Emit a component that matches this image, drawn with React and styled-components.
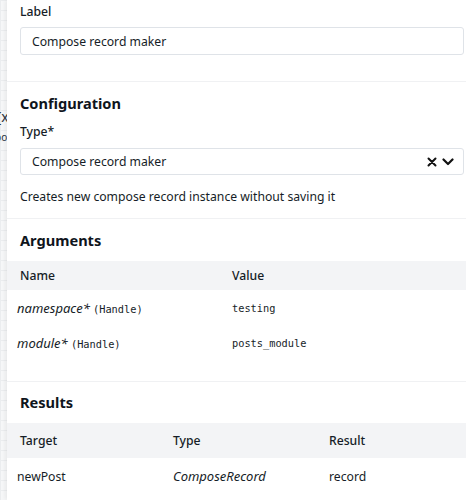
import React from "react";
import styled, { createGlobalStyle } from "styled-components";

const Global = createGlobalStyle`
  html, body { margin: 0; padding: 0; }
  body {
    width: 466px;
    height: 500px;
    overflow: hidden;
    font-family: "Noto Sans", "Open Sans", sans-serif;
    color: #161d27;
    background-color: #f6f7f8;
    background-image:
      linear-gradient(#ebedef 1px, transparent 1px),
      linear-gradient(90deg, #ebedef 1px, transparent 1px);
    background-size: 10px 10px;
  }
`;

const Stage = styled.div`
  position: relative;
  display: flex;
  height: 500px;
`;

const Canvas = styled.div`
  position: relative;
  width: 7px;
  flex: none;
  overflow: hidden;
`;

/* fragment of a workflow node sitting on the canvas */
const NodeText = styled.span`
  position: absolute;
  left: ${(p) => p.$x}px;
  top: ${(p) => p.$y}px;
  font-size: ${(p) => p.$size}px;
  white-space: nowrap;
  color: #2a3340;
`;

const Panel = styled.aside`
  flex: none;
  width: 470px;
  height: 500px;
  background: #ffffff;
  box-shadow: -2px 0 4px rgba(0, 0, 0, 0.06);
`;

const Section = styled.section`
  padding: ${(p) => p.$pad};
  border-bottom: ${(p) => (p.$last ? "none" : "1px solid #f0f1f3")};
`;

const Inner = styled.div`
  padding: 0 13px;
`;

const Label = styled.div`
  font-size: 12.2px;
  line-height: 16px;
  font-weight: 500;
  margin-top: ${(p) => p.$mt || 0}px;
`;

const Heading = styled.h2`
  margin: 0;
  font-size: 14.6px;
  line-height: 20px;
  font-weight: 700;
  color: #0f151c;
  padding: 0 13px;
`;

const Input = styled.div`
  margin-top: ${(p) => p.$mt}px;
  height: ${(p) => p.$h}px;
  box-sizing: border-box;
  border: 1px solid #dfe3e8;
  border-radius: 3px;
  display: flex;
  align-items: center;
  padding: 0 9px 0 11px;
  font-size: 12.2px;
`;

const InputText = styled.span`
  flex: 1;
`;

const Controls = styled.span`
  display: flex;
  align-items: center;
  gap: 5px;
`;

const Description = styled.div`
  margin-top: 14px;
  font-size: 12.2px;
  line-height: 16px;
`;

const Table = styled.div`
  margin-top: 11px;
`;

const Row = styled.div`
  display: grid;
  grid-template-columns: ${(p) => p.$cols};
  align-items: center;
  height: ${(p) => p.$h}px;
  background: ${(p) => (p.$head ? "#f3f4f6" : "transparent")};
  font-size: 12.2px;
  font-weight: ${(p) => (p.$head ? 500 : 400)};
`;

const Cell = styled.div`
  padding-left: ${(p) => p.$pl}px;
  white-space: nowrap;
  font-style: ${(p) => (p.$italic ? "italic" : "normal")};
  font-size: ${(p) => (p.$italic ? "13px" : "inherit")};
`;

const Mono = styled.code`
  font-family: "DejaVu Sans Mono", "Liberation Mono", monospace;
  font-size: 10.3px;
  font-style: normal;
`;

const Italic = styled.em`
  font-style: italic;
  font-size: 13px;
`;

const Clear = () => (
  <svg width="10" height="10" viewBox="0 0 10 10">
    <path d="M1.5 1.5 L8.5 8.5 M8.5 1.5 L1.5 8.5" stroke="#111" strokeWidth="2" strokeLinecap="round" />
  </svg>
);

const Chevron = () => (
  <svg width="12" height="10" viewBox="0 0 12 10">
    <path d="M1.5 2.5 L6 7 L10.5 2.5" fill="none" stroke="#111" strokeWidth="2.2" strokeLinecap="round" strokeLinejoin="round" />
  </svg>
);

const ARG_COLS = "212px 1fr";
const RES_COLS = "153px 156px 1fr";

export default function App() {
  return (
    <>
      <Global />
      <Stage>
        <Canvas>
          <NodeText $x={-4} $y={107} $size={14}>{"{x"}</NodeText>
          <NodeText $x={-5} $y={130} $size={10}>bo</NodeText>
        </Canvas>
        <Panel>
          <Section $pad="4px 0 26px">
            <Inner>
              <Label>Label</Label>
              <Input $mt={7} $h={28}>
                <InputText>Compose record maker</InputText>
              </Input>
            </Inner>
          </Section>

          <Section $pad="11px 0 13px">
            <Heading>Configuration</Heading>
            <Inner>
              <Label $mt={11}>Type*</Label>
              <Input $mt={8} $h={27}>
                <InputText>Compose record maker</InputText>
                <Controls>
                  <Clear />
                  <Chevron />
                </Controls>
              </Input>
              <Description>Creates new compose record instance without saving it</Description>
            </Inner>
          </Section>

          <Section $pad="11px 0 21px">
            <Heading>Arguments</Heading>
            <Table>
              <Row $head $cols={ARG_COLS} $h={29}>
                <Cell $pl={13}>Name</Cell>
                <Cell $pl={13}>Value</Cell>
              </Row>
              <Row $cols={ARG_COLS} $h={35}>
                <Cell $pl={10}>
                  <Italic>namespace*</Italic> <Mono>(Handle)</Mono>
                </Cell>
                <Cell $pl={13}>
                  <Mono>testing</Mono>
                </Cell>
              </Row>
              <Row $cols={ARG_COLS} $h={35}>
                <Cell $pl={10}>
                  <Italic>module*</Italic> <Mono>(Handle)</Mono>
                </Cell>
                <Cell $pl={13}>
                  <Mono>posts_module</Mono>
                </Cell>
              </Row>
            </Table>
          </Section>

          <Section $pad="10px 0 0" $last>
            <Heading>Results</Heading>
            <Table>
              <Row $head $cols={RES_COLS} $h={35}>
                <Cell $pl={13}>Target</Cell>
                <Cell $pl={13}>Type</Cell>
                <Cell $pl={13}>Result</Cell>
              </Row>
              <Row $cols={RES_COLS} $h={36}>
                <Cell $pl={10}>newPost</Cell>
                <Cell $pl={13} $italic>ComposeRecord</Cell>
                <Cell $pl={13}>record</Cell>
              </Row>
            </Table>
          </Section>
        </Panel>
      </Stage>
    </>
  );
}
